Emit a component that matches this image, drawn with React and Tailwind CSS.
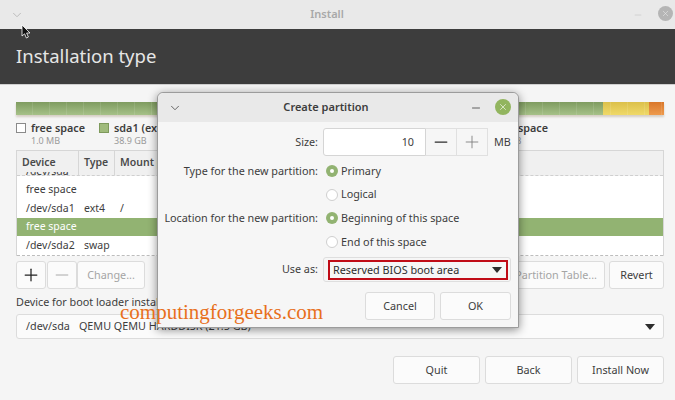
import { ChevronDown, Minus, Plus, X } from 'lucide-react'

function Caret() {
  return <span className="w-0 h-0 border-l-[5px] border-r-[5px] border-t-[6px] border-l-transparent border-r-transparent border-t-[#2d2d2d]" />
}

function Legend({ swatch, name, size, className }) {
  return (
    <div className={`flex gap-[5px] ${className}`}>
      <span className={`w-[10px] h-[10px] mt-[3px] border ${swatch}`} />
      <div className="flex flex-col">
        <span className="text-[10.8px] leading-[15px] font-semibold text-[#3d3d3d]">{name}</span>
        <span className="text-[9px] leading-[12px] text-[#9a9a9a]">{size}</span>
      </div>
    </div>
  )
}

function Row({ device, type, mount, selected }) {
  return (
    <div className={`h-[18.6px] flex items-center pl-[9px] text-[10.5px] ${selected ? 'bg-[#92b372] text-white' : 'text-[#3d3d3d]'}`}>
      <span className="w-[58px]">{device}</span>
      <span className="w-[36px]">{type}</span>
      <span>{mount}</span>
    </div>
  )
}

function Btn({ children, className = '' }) {
  return (
    <button className={`h-[28px] bg-[#fbfbfb] border border-[#dcdcdc] rounded-[3px] text-[10.8px] text-[#3d3d3d] flex items-center justify-center ${className}`}>
      {children}
    </button>
  )
}

function Radio({ checked, label }) {
  return (
    <div className="h-[23.6px] pl-[3px] flex items-center gap-[3px]">
      {checked ? (
        <span className="w-[12px] h-[12px] rounded-full bg-[#92b372] flex items-center justify-center">
          <span className="w-[4px] h-[4px] rounded-full bg-white" />
        </span>
      ) : (
        <span className="w-[12px] h-[12px] rounded-full bg-white border border-[#cfcfcf]" />
      )}
      <span className="text-[10.8px] text-[#3d3d3d]">{label}</span>
    </div>
  )
}

function FieldLabel({ children }) {
  return <div className="h-[23.6px] flex items-center justify-end text-[10.8px] text-[#3d3d3d]">{children}</div>
}

function Dialog() {
  return (
    <div className="absolute left-[157px] top-[92px] w-[362px] h-[236px] bg-[#f6f6f6] rounded-t-[6px] border border-[#9c9c9c] shadow-[0_2px_10px_rgba(0,0,0,0.45)] flex flex-col">
      <div className="h-[29px] bg-[#e9e9e9] rounded-t-[6px] flex items-center relative shrink-0">
        <ChevronDown size={14} strokeWidth={1.5} className="ml-[10px] text-[#555]" />
        <span className="absolute left-0 right-[24px] text-center text-[11px] font-semibold text-[#3d3d3d]">Create partition</span>
        <Minus size={12} strokeWidth={1.5} className="absolute right-[36px] top-[9px] text-[#333]" />
        <span className="absolute right-[7px] top-[6px] w-[16px] h-[16px] rounded-full bg-[#92b55f] flex items-center justify-center">
          <X size={10} strokeWidth={1.5} className="text-white" />
        </span>
      </div>
      <div className="flex pt-[6px]">
        <div className="w-[160px] shrink-0 flex flex-col">
          <div className="h-[28px] flex items-center justify-end text-[10.8px] text-[#3d3d3d]">Size:</div>
          <div className="h-[3.2px]" />
          <FieldLabel>Type for the new partition:</FieldLabel>
          <div className="h-[23.6px]" />
          <FieldLabel>Location for the new partition:</FieldLabel>
          <div className="h-[23.6px]" />
          <div className="h-[25px] mt-[3.4px] flex items-center justify-end text-[10.8px] text-[#3d3d3d]">Use as:</div>
        </div>
        <div className="ml-[5px] flex flex-col w-[188px]">
          <div className="flex items-center h-[28px]">
            <div className="w-[103px] h-[28px] bg-white border border-[#d5d5d5] rounded-l-[3px] flex items-center justify-end pr-[11px] text-[10.8px] text-[#3d3d3d]">10</div>
            <div className="w-[31px] h-[28px] bg-[#f6f6f6] border-y border-r border-[#e0e0e0] flex items-center justify-center">
              <Minus size={20} strokeWidth={1.5} className="text-[#2d2d2d]" />
            </div>
            <div className="w-[31px] h-[28px] bg-[#f6f6f6] border-y border-r border-[#e0e0e0] flex items-center justify-center">
              <Plus size={20} strokeWidth={1} className="text-[#777]" />
            </div>
            <span className="ml-[6px] text-[10.8px] text-[#3d3d3d]">MB</span>
          </div>
          <div className="h-[3.2px]" />
          <Radio checked label="Primary" />
          <Radio label="Logical" />
          <Radio checked label="Beginning of this space" />
          <Radio label="End of this space" />
          <div className="mt-[3.4px] h-[25px] border border-[#dedede] rounded-[3px] pt-[2px] pl-[4px] pr-[2px]">
            <div className="h-[20px] border-2 border-[#c00c17] flex items-center justify-between pl-[3px] pr-[4px] text-[10.8px] text-[#2d2d2d]">
              <span>Reserved BIOS boot area</span>
              <Caret />
            </div>
          </div>
        </div>
      </div>
      <div className="flex justify-end gap-[5px] pr-[7px] mt-[10px]">
        <Btn className="w-[70px]">Cancel</Btn>
        <Btn className="w-[71px]">OK</Btn>
      </div>
    </div>
  )
}

export default function App() {
  return (
    <div className="relative w-[675px] h-[400px] overflow-hidden bg-[#f5f5f5] font-['Noto_Sans','Open_Sans',sans-serif]">
      <div className="h-[29px] bg-[#e9e9e9] flex items-center relative">
        <ChevronDown size={14} strokeWidth={1.5} className="ml-[10px] text-[#b5b5b5]" />
        <span className="absolute left-0 right-[21px] text-center text-[11px] font-semibold text-[#a8a8a8]">Install</span>
        <Minus size={10} strokeWidth={1.5} className="absolute right-[32px] top-[10px] text-[#c5c5c5]" />
        <span className="absolute right-[2px] top-[6px] w-[15px] h-[15px] rounded-full bg-[#b5b5b5] flex items-center justify-center">
          <X size={9} strokeWidth={1.5} className="text-[#e9e9e9]" />
        </span>
      </div>
      <div className="h-[56px] bg-[#3d3d3d] flex items-center px-4 border-b border-[#cfcfcf]">
        <h1 className="text-[18.5px] text-[#e6e6e6] leading-none">Installation type</h1>
      </div>
      <div className="pl-4 pr-[11px] pt-[17px]">
        <div className="h-[13px] flex relative overflow-hidden shadow-[0_2px_2px_rgba(120,90,50,0.25)]">
          <div className="flex-1 bg-gradient-to-b from-[#7f9c60] to-[#a6c188]" />
          <div className="w-[46px] bg-gradient-to-b from-[#dcc04a] to-[#efd968]" />
          <div className="w-[15px] bg-gradient-to-b from-[#d9772a] to-[#ee9a4c]" />
          <div className="absolute inset-0 bg-[repeating-linear-gradient(90deg,transparent_0,transparent_16px,rgba(255,255,255,0.1)_16px,rgba(255,255,255,0.1)_17px)]" />
        </div>
        <div className="flex mt-[5px] h-[25px]">
          <Legend swatch="bg-white border-[#8a8a8a]" name="free space" size="1.0 MB" className="w-[83px]" />
          <Legend swatch="bg-[#a0bb7c] border-[#7e9a5c]" name="sda1 (ext4)" size="38.9 GB" className="w-[380px]" />
          <Legend swatch="bg-white border-[#8a8a8a]" name="free space" size="1.9 GB" />
        </div>
        <div className="mt-[5px] border border-[#d6d6d6] border-b-0 h-[106px] flex flex-col overflow-hidden">
          <div className="h-[25px] shrink-0 bg-[#f0f0f0] flex text-[10.5px] font-semibold text-[#4a4a4a] border-b border-dashed border-[#cfcfcf]">
            <span className="w-[62px] border-r border-[#d6d6d6] pl-[5px] flex items-center">Device</span>
            <span className="w-[36px] border-r border-[#d6d6d6] pl-[5px] flex items-center">Type</span>
            <span className="pl-[5px] flex items-center">Mount point</span>
          </div>
          <div className="h-[4px] -mt-[4px] shrink-0 overflow-hidden pl-[9px] text-[10.5px] leading-[10px] text-[#3d3d3d]">
            <div className="-mt-[6px]">/dev/sda</div>
          </div>
          <div className="flex-1 bg-white flex flex-col justify-end border-b border-dashed border-[#bdbdbd]">
            <Row device="free space" />
            <Row device="/dev/sda1" type="ext4" mount="/" />
            <Row device="free space" selected />
            <Row device="/dev/sda2" type="swap" />
          </div>
        </div>
        <div className="mt-[5px] flex">
          <Btn className="w-[30px] text-[#222]"><Plus size={20} strokeWidth={1.5} /></Btn>
          <Btn className="w-[30px] ml-[1px] text-[#aaa]"><Minus size={20} strokeWidth={1.2} /></Btn>
          <Btn className="w-[68px] !text-[#a5a5a5]">Change...</Btn>
          <Btn className="w-[105px] ml-auto !text-[#a5a5a5] !justify-end pr-[7px]">Partition Table...</Btn>
          <Btn className="w-[55px] ml-[4px]">Revert</Btn>
        </div>
        <div className="mt-[5px] text-[10.8px] leading-[16px] text-[#3d3d3d]">Device for boot loader installation:</div>
        <div className="mt-[4px] h-[25px] bg-[#fbfbfb] border border-[#dcdcdc] rounded-[3px] flex items-center justify-between pl-[9px] pr-[8px] text-[10.8px] text-[#3d3d3d]">
          <span>/dev/sda<span className="ml-[9px]">QEMU QEMU HARDDISK (21.5 GB)</span></span>
          <Caret />
        </div>
        <div className="mt-[17px] flex justify-end gap-[5px]">
          <Btn className="w-[87px]">Quit</Btn>
          <Btn className="w-[87px]">Back</Btn>
          <Btn className="w-[87px]">Install Now</Btn>
        </div>
      </div>
      <Dialog />
      <span className="absolute left-[120px] top-[299px] font-['Liberation_Serif',serif] text-[21px] leading-[26px] text-[#e8701c]">computingforgeeks.com</span>
      <svg className="absolute left-[21px] top-[24px]" width="11" height="16" viewBox="0 0 11 16">
        <path d="M1 1 L1 12 L3.6 9.8 L5.4 14 L7.4 13 L5.6 9 L9 9 Z" fill="#111" stroke="#fff" strokeWidth="0.8" />
      </svg>
    </div>
  )
}
